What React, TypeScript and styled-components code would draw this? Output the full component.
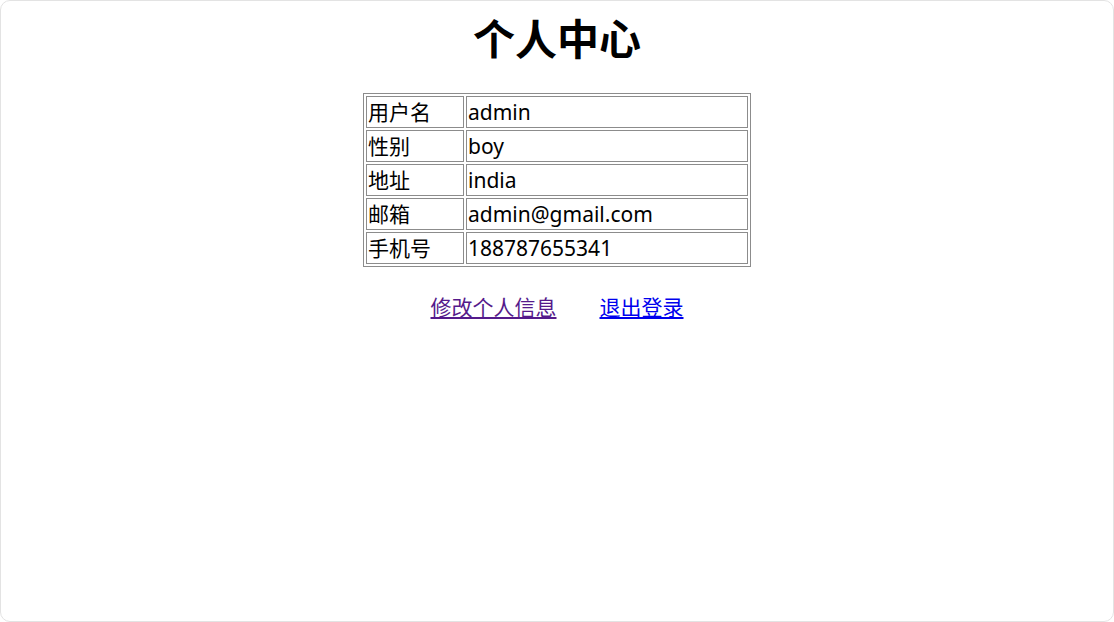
import styled, { createGlobalStyle } from "styled-components";

const GlobalStyle = createGlobalStyle`
  html, body {
    margin: 0;
    padding: 0;
    background: #ffffff;
  }
  body {
    font-family: "Noto Sans", "Noto Sans CJK SC", sans-serif;
    color: #000;
  }
`;

const Page = styled.div`
  box-sizing: border-box;
  height: 100vh;
  border: 1px solid #e3e3e3;
  border-radius: 10px;
  background: #fff;
  padding-top: 14px;
`;

const Title = styled.h1`
  margin: 0 0 30px;
  font-size: 42px;
  line-height: 48px;
  font-weight: 700;
  text-align: center;
`;

const InfoTable = styled.table`
  margin: 0 auto;
  width: 388px;
  border: 1px solid #8c8c8c;
  border-spacing: 2px;
`;

const Cell = styled.td<{ $label?: boolean }>`
  border: 1px solid #8c8c8c;
  padding: 1px 1px;
  font-size: 21px;
  line-height: 28px;
  white-space: nowrap;
  width: ${(p) => (p.$label ? "94px" : "auto")};
`;

const Links = styled.div`
  display: flex;
  justify-content: center;
  gap: 43px;
  margin-top: 26px;
`;

const Link = styled.a<{ $visited?: boolean }>`
  font-size: 21px;
  line-height: 28px;
  color: ${(p) => (p.$visited ? "#551a8b" : "#0000ee")};
  text-decoration: underline;
`;

const rows = [
  ["用户名", "admin"],
  ["性别", "boy"],
  ["地址", "india"],
  ["邮箱", "admin@gmail.com"],
  ["手机号", "188787655341"],
];

export default function App() {
  return (
    <>
      <GlobalStyle />
      <Page>
        <Title>个人中心</Title>
        <InfoTable>
          <tbody>
            {rows.map(([label, value]) => (
              <tr key={label}>
                <Cell $label>{label}</Cell>
                <Cell>{value}</Cell>
              </tr>
            ))}
          </tbody>
        </InfoTable>
        <Links>
          <Link href="#" $visited>
            修改个人信息
          </Link>
          <Link href="#">退出登录</Link>
        </Links>
      </Page>
    </>
  );
}
